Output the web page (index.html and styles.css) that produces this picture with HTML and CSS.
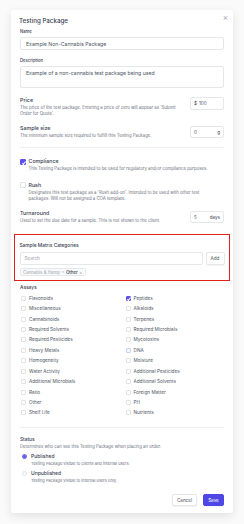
FILE: index.html
```html
<!DOCTYPE html>
<html lang="en">
<head>
    <meta charset="UTF-8">
    <meta name="viewport" content="width=device-width, initial-scale=1.0">
    <title>Testing Package</title>
    <link rel="stylesheet" href="styles.css">
</head>
<body>
    <div class="modal">
        <span class="close">&times;</span>
        <h2 class="title">Testing Package</h2>

        <div class="field">
            <label class="small-label">Name</label>
            <div class="input">Example Non-Cannabis Package</div>
        </div>

        <div class="field">
            <label class="small-label">Description</label>
            <div class="input textarea">Example of a non-cannabis test package being used</div>
        </div>

        <div class="row price-row">
            <div class="row-text">
                <div class="label">Price</div>
                <div class="help">The price of the test package. Entering a price of zero will appear as 'Submit Order for Quote'.</div>
            </div>
            <div class="input mini"><span class="pre">$</span>100</div>
        </div>

        <div class="row size-row">
            <div class="row-text">
                <div class="label">Sample size</div>
                <div class="help">The minimum sample size required to fulfill this Testing Package.</div>
            </div>
            <div class="input mini split"><span>0</span><span class="unit">g</span></div>
        </div>

        <hr class="divider">

        <div class="check-item compliance">
            <span class="box checked"></span>
            <div>
                <div class="label">Compliance</div>
                <div class="help">This Testing Package is intended to be used for regulatory and/or compliance purposes.</div>
            </div>
        </div>

        <div class="check-item rush">
            <span class="box"></span>
            <div>
                <div class="label">Rush</div>
                <div class="help">Designates this test package as a 'Rush add-on'. Intended to be used with other test packages. Will not be assigned a COA template.</div>
            </div>
        </div>

        <div class="row turn-row">
            <div class="row-text">
                <div class="label">Turnaround</div>
                <div class="help">Used to set the due date for a sample. This is not shown to the client.</div>
            </div>
            <div class="input mini split"><span>5</span><span class="unit">days</span></div>
        </div>

        <div class="highlight">
            <div class="label sm">Sample Matrix Categories</div>
            <div class="search-row">
                <div class="input search">Search</div>
                <div class="btn add">Add</div>
            </div>
            <div class="tag">Cannabis &amp; Hemp <span class="chev">&gt;</span> <b>Other</b> <span class="x">&times;</span></div>
        </div>

        <div class="label sm assays-title">Assays</div>
        <div class="assays">
            <div class="assay"><span class="box"></span>Flavonoids</div>
            <div class="assay"><span class="box checked"></span>Peptides</div>
            <div class="assay"><span class="box"></span>Miscellaneous</div>
            <div class="assay"><span class="box"></span>Alkaloids</div>
            <div class="assay"><span class="box"></span>Cannabinoids</div>
            <div class="assay"><span class="box"></span>Terpenes</div>
            <div class="assay"><span class="box"></span>Required Solvents</div>
            <div class="assay"><span class="box"></span>Required Microbials</div>
            <div class="assay"><span class="box"></span>Required Pesticides</div>
            <div class="assay"><span class="box"></span>Mycotoxins</div>
            <div class="assay"><span class="box"></span>Heavy Metals</div>
            <div class="assay"><span class="box focus"></span>DNA</div>
            <div class="assay"><span class="box"></span>Homogeneity</div>
            <div class="assay"><span class="box"></span>Moisture</div>
            <div class="assay"><span class="box"></span>Water Activity</div>
            <div class="assay"><span class="box"></span>Additional Pesticides</div>
            <div class="assay"><span class="box"></span>Additional Microbials</div>
            <div class="assay"><span class="box"></span>Additional Solvents</div>
            <div class="assay"><span class="box"></span>Ratio</div>
            <div class="assay"><span class="box"></span>Foreign Matter</div>
            <div class="assay"><span class="box"></span>Other</div>
            <div class="assay"><span class="box"></span>PH</div>
            <div class="assay"><span class="box"></span>Shelf Life</div>
            <div class="assay"><span class="box"></span>Nutrients</div>
        </div>

        <hr class="divider bottom-divider">

        <div class="label sm">Status</div>
        <div class="help">Determines who can see this Testing Package when placing an order.</div>

        <div class="radio-item first">
            <span class="radio on"></span>
            <div>
                <div class="label">Published</div>
                <div class="help">Testing Package visible to clients and internal users.</div>
            </div>
        </div>
        <div class="radio-item">
            <span class="radio"></span>
            <div>
                <div class="label">Unpublished</div>
                <div class="help">Testing Package visible to internal users only.</div>
            </div>
        </div>

        <div class="actions">
            <div class="btn">Cancel</div>
            <div class="btn primary">Save</div>
        </div>
    </div>
</body>
</html>
```

FILE: styles.css
```css
* {
    margin: 0;
    padding: 0;
    box-sizing: border-box;
    font-family: Inter, 'Noto Sans', sans-serif;
}

body {
    background: #fafafa;
    width: 244px;
    height: 524px;
    overflow: hidden;
}

.modal {
    position: relative;
    margin: 10px 11px 0;
    width: 222px;
    height: 503px;
    background: white;
    border-radius: 3px;
    box-shadow: 0 3px 10px rgba(0,0,0,0.1);
    padding: 7px 9px 0;
    color: #1f2937;
    font-size: 5px;
    line-height: 7px;
}

.close {
    position: absolute;
    top: 3px;
    right: 5px;
    font-size: 8px;
    line-height: 8px;
    color: #9ca3af;
}

.title {
    font-size: 6.2px;
    line-height: 8px;
    font-weight: 500;
    color: #374151;
    margin-left: -1px;
}

.field {
    margin-top: 4px;
}

.small-label {
    display: block;
    font-size: 4.2px;
    line-height: 6px;
    font-weight: 500;
    color: #374151;
}

.input {
    margin-top: 2px;
    height: 13px;
    border: 0.6px solid #e5e7eb;
    border-radius: 2px;
    font-size: 5.2px;
    line-height: 12px;
    padding: 0 5px;
    color: #4b5563;
    background: white;
}

.textarea {
    height: 22px;
    line-height: 7px;
    padding-top: 2.5px;
}

.field + .field {
    margin-top: 8px;
}

.label {
    font-size: 5.3px;
    line-height: 7px;
    font-weight: 500;
    color: #374151;
}

.label.sm {
    font-size: 4.8px;
}

.help {
    font-size: 4.3px;
    line-height: 6.3px;
    color: #6b7280;
    margin-top: 1px;
}

.row {
    display: flex;
    justify-content: space-between;
    align-items: flex-start;
}

.row-text {
    width: 165px;
}

.price-row {
    margin-top: 8.5px;
}

.size-row {
    margin-top: 8px;
}

.turn-row {
    margin-top: 7.8px;
}

.input.mini {
    width: 34px;
    height: 12.5px;
    margin-top: 0.5px;
    line-height: 11px;
    padding: 0 3px;
    font-size: 4.6px;
}

.input.split {
    display: flex;
    justify-content: space-between;
}

.pre {
    margin-right: 2px;
    color: #374151;
}

.unit {
    color: #374151;
}

.divider {
    border: none;
    border-top: 0.6px solid #eceef1;
    margin: 8px 0 0;
}

.check-item {
    display: flex;
    gap: 3px;
    align-items: flex-start;
}

.check-item .help {
    width: 190px;
}

.compliance {
    margin-top: 10px;
}

.rush {
    margin-top: 9px;
}

.box {
    flex: none;
    display: inline-block;
    width: 5.5px;
    height: 5.5px;
    border: 0.6px solid #dfe2e6;
    border-radius: 1px;
    background: white;
    position: relative;
}

.check-item .box {
    margin-top: 0.8px;
}

.box.checked {
    background: #5b52e8;
    border-color: #5b52e8;
}

.box.checked::after {
    content: "";
    position: absolute;
    left: 1.5px;
    top: 0.4px;
    width: 1.4px;
    height: 2.7px;
    border: solid white;
    border-width: 0 0.7px 0.7px 0;
    transform: rotate(40deg);
}

.box.focus {
    border-color: #c7d2fe;
    background: #f5f7ff;
}

.highlight {
    margin: 9.5px -6px 0;
    border: 1.6px solid #e0201b;
    padding: 6.9px 4.5px 4.4px;
}

.search-row {
    display: flex;
    gap: 3px;
    margin-top: 3.5px;
}

.input.search {
    flex: 1;
    margin-top: 0;
    height: 12.5px;
    line-height: 11px;
    font-size: 4.6px;
    color: #9ca3af;
    padding: 0 4px;
}

.btn {
    border: 0.6px solid #e5e7eb;
    border-radius: 2px;
    font-size: 4.6px;
    color: #4b5563;
    background: white;
    text-align: center;
    box-shadow: 0 0.5px 1px rgba(0,0,0,0.05);
}

.btn.add {
    width: 19px;
    height: 12.5px;
    line-height: 11px;
}

.tag {
    display: flex;
    gap: 1.5px;
    width: fit-content;
    margin-top: 3px;
    height: 8px;
    line-height: 7px;
    padding: 0 2.5px;
    font-size: 4.4px;
    color: #9ca3af;
    background: #f9fafb;
    border: 0.6px solid #e5e7eb;
    border-radius: 1.5px;
}

.tag b {
    color: #374151;
    font-weight: 500;
}

.chev, .x {
    color: #9ca3af;
}

.assays-title {
    margin-top: 2.5px;
    line-height: 7px;
}

.assays {
    display: grid;
    grid-template-columns: 104.5px 1fr;
    margin-top: 2.3px;
}

.assay {
    display: flex;
    align-items: center;
    gap: 3px;
    height: 10.45px;
    padding-left: 1px;
    font-size: 4.7px;
    color: #4b5563;
}

.assay .box {
    width: 5px;
    height: 5px;
}

.bottom-divider {
    margin-top: 8.3px;
}

.bottom-divider + .label {
    margin-top: 8.7px;
}

.radio-item {
    display: flex;
    gap: 4.5px;
    align-items: flex-start;
    margin-top: 3.2px;
    padding-left: 1.5px;
}

.radio-item.first {
    margin-top: 2.7px;
}

.radio-item .label {
    font-size: 5px;
}

.radio-item .help {
    font-size: 4px;
    margin-top: 0.5px;
}

.radio {
    flex: none;
    width: 5px;
    height: 5px;
    margin-top: 1px;
    border-radius: 50%;
    border: 0.6px solid #dfe2e6;
    background: white;
}

.radio.on {
    border: 1.5px solid #5b52e8;
    background: white;
    box-shadow: inset 0 0 0 2px #5b52e8;
}

.actions {
    display: flex;
    justify-content: flex-end;
    gap: 6px;
    margin-top: 9.7px;
}

.actions .btn {
    height: 12.5px;
    line-height: 11px;
    width: 25px;
}

.actions .btn.primary {
    width: 21px;
    background: #5046e5;
    border-color: #5046e5;
    color: white;
}
```
